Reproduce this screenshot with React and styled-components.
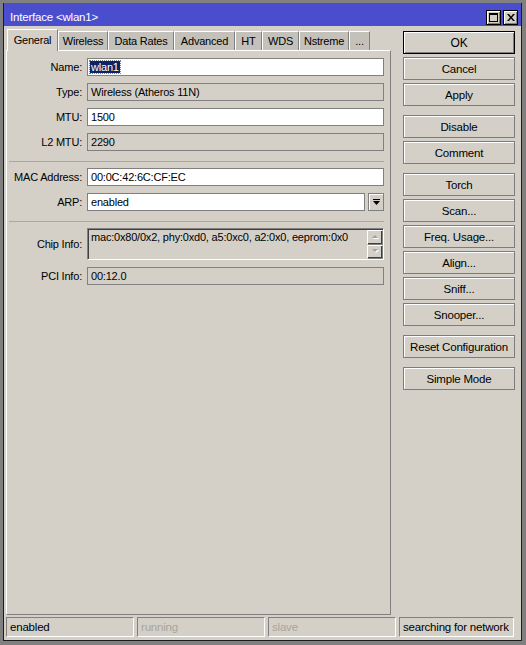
import React from 'react'
import styled, { createGlobalStyle } from 'styled-components'

const GlobalStyle = createGlobalStyle`
	html, body {
		margin: 0;
		padding: 0;
		background: #808080;
	}
	body {
		font-family: "Liberation Sans", Arial, sans-serif;
		font-size: 11px;
		letter-spacing: -0.2px;
		color: #000;
	}
`

const Desktop = styled.div`
	width: 526px;
	height: 645px;
	padding: 3px 4px 4px 3px;
	box-sizing: border-box;
	overflow: hidden;
`

const Window = styled.div`
	width: 519px;
	height: 638px;
	box-sizing: border-box;
	background: #d4d0c8;
	border: 1px solid #1c1c1c;
	border-top: none;
	display: flex;
	flex-direction: column;
`

const TitleBar = styled.div`
	height: 23px;
	box-sizing: border-box;
	padding: 5px 3px 0 6px;
	background: #4a4ecd;
	color: #fff;
	display: flex;
	align-items: center;
	font-size: 11.5px;
`

const Title = styled.span`
	flex: 1;
`

const TitleButtons = styled.div`
	display: flex;
	gap: 2px;
`

const TitleButton = styled.div`
	width: 15px;
	height: 15px;
	box-sizing: border-box;
	background: #d4d0c8;
	border: 1px solid #000;
	box-shadow: inset 1px 1px 0 #fff, inset -1px -1px 0 #808080;
	display: flex;
	align-items: center;
	justify-content: center;
`

const Main = styled.div`
	flex: 1;
	display: flex;
	gap: 12px;
	padding: 3px 6px 0 2px;
	min-height: 0;
`

const LeftCol = styled.div`
	width: 385px;
	display: flex;
	flex-direction: column;
`

const Tabs = styled.div`
	height: 21px;
	display: flex;
	align-items: flex-end;
	padding-left: 1px;
	position: relative;
	z-index: 1;
`

const Tab = styled.div`
	width: ${p => p.$w}px;
	box-sizing: border-box;
	height: ${p => (p.$active ? 22 : 19)}px;
	margin-bottom: ${p => (p.$active ? -1 : 0)}px;
	background: ${p => (p.$active ? '#d4d0c8' : '#c4c1ba')};
	border-top: 1px solid #fff;
	border-left: 1px solid #fff;
	border-right: 1px solid #808080;
	display: flex;
	align-items: center;
	justify-content: center;
	padding-bottom: ${p => (p.$active ? 2 : 0)}px;
`

const Panel = styled.div`
	flex: 1;
	border-top: 1px solid #fff;
	border-left: 1px solid #fff;
	border-right: 1px solid #808080;
	border-bottom: 1px solid #808080;
	padding: 7px 6px 0 0;
	display: flex;
	flex-direction: column;
	gap: 7px;
`

const Row = styled.div`
	display: grid;
	grid-template-columns: 75px 1fr;
	column-gap: 5px;
	align-items: center;
`

const Label = styled.span`
	text-align: right;
`

const Field = styled.div`
	height: 18px;
	box-sizing: border-box;
	border: 1px solid #808080;
	background: ${p => (p.$editable ? '#fff' : '#d4d0c8')};
	padding: 0 3px;
	display: flex;
	align-items: center;
	white-space: nowrap;
	overflow: hidden;
`

const Selected = styled.span`
	background: #0a246a;
	color: #fff;
	outline: 1px dotted #808080;
	margin-left: -1px;
	padding: 0 1px;
`

const Combo = styled.div`
	display: flex;
	gap: 3px;
	& > ${Field} {
		flex: 1;
	}
`

const DropButton = styled.div`
	width: 16px;
	height: 18px;
	box-sizing: border-box;
	border: 1px solid #808080;
	box-shadow: inset 1px 1px 0 #fff;
	display: flex;
	align-items: center;
	justify-content: center;
`

const Separator = styled.div`
	height: 1px;
	background: #aaa7a0;
	margin: 3px 0 -1px 2px;
`

const InfoBox = styled.div`
	height: 32px;
	box-sizing: border-box;
	border-top: 1px solid #808080;
	border-left: 1px solid #808080;
	border-bottom: 1px solid #fff;
	border-right: 1px solid #fff;
	box-shadow: inset 1px 1px 0 #404040;
	display: flex;
`

const InfoText = styled.div`
	flex: 1;
	padding: 2px 0 0 3px;
	white-space: nowrap;
	overflow: hidden;
`

const ScrollCol = styled.div`
	width: 16px;
	display: flex;
	flex-direction: column;
	padding-top: 1px;
`

const ScrollButton = styled.div`
	height: 15px;
	box-sizing: border-box;
	border: 1px solid #808080;
	border-top-color: #fff;
	border-left-color: #fff;
	box-shadow: inset -1px -1px 0 #404040;
	display: flex;
	align-items: center;
	justify-content: center;
`

const RightCol = styled.div`
	width: 112px;
	padding-top: 2px;
	display: flex;
	flex-direction: column;
	gap: 9px;
`

const ButtonGroup = styled.div`
	display: flex;
	flex-direction: column;
	gap: 3px;
`

const Button = styled.div`
	height: 23px;
	box-sizing: border-box;
	background: #d4d0c8;
	border: 1px solid ${p => (p.$primary ? '#000' : '#7c7c7c')};
	box-shadow: inset 1px 1px 0 #fff${p => (p.$primary ? ', inset -1px -1px 0 #808080' : '')};
	display: flex;
	align-items: center;
	justify-content: center;
	font-size: ${p => (p.$primary ? 12 : 11.5)}px;
`

const StatusBar = styled.div`
	display: flex;
	gap: 3px;
	padding: 2px 7px 3px 2px;
`

const StatusCell = styled.div`
	width: ${p => p.$w}px;
	height: 20px;
	box-sizing: border-box;
	border-top: 1px solid #808080;
	border-left: 1px solid #808080;
	border-bottom: 1px solid #fff;
	border-right: 1px solid #fff;
	padding: 0 3px;
	display: flex;
	align-items: center;
	color: ${p => (p.$dim ? '#a8a5a0' : '#000')};
	font-size: 11.5px;
	white-space: nowrap;
`

const tabs = [
	['General', 51],
	['Wireless', 50],
	['Data Rates', 66],
	['Advanced', 61],
	['HT', 27],
	['WDS', 37],
	['Nstreme', 50],
	['...', 21]
]

const buttonGroups = [
	['OK', 'Cancel', 'Apply'],
	['Disable', 'Comment'],
	['Torch', 'Scan...', 'Freq. Usage...', 'Align...', 'Sniff...', 'Snooper...'],
	['Reset Configuration'],
	['Simple Mode']
]

const status = [
	['enabled', 128, false],
	['running', 128, true],
	['slave', 128, true],
	['searching for network', 115, false]
]

const MaxIcon = () => (
	<svg width="9" height="9" viewBox="0 0 9 9">
		<rect x="0.5" y="0.5" width="8" height="8" fill="none" stroke="#000" />
		<rect x="0" y="0" width="9" height="2" fill="#000" />
	</svg>
)

const CloseIcon = () => (
	<svg width="8" height="7" viewBox="0 0 8 7">
		<path d="M0 0h2l2 2.5L6 0h2L5 3.5 8 7H6L4 4.5 2 7H0l3-3.5z" fill="#000" />
	</svg>
)

const DropIcon = () => (
	<svg width="7" height="7" viewBox="0 0 7 7">
		<rect x="0" y="0" width="7" height="1" fill="#000" />
		<path d="M0 2h7L3.5 6z" fill="#000" />
	</svg>
)

const Arrow = ({ down }) => (
	<svg width="7" height="5" viewBox="0 0 7 5">
		{down ? (
			<>
				<path d="M1 1h6L4 4z" fill="#fff" />
				<path d="M0 0h6L3 3z" fill="#a0a0a0" />
			</>
		) : (
			<>
				<path d="M1 4h6L4 1z" fill="#fff" />
				<path d="M0 3h6L3 0z" fill="#a0a0a0" />
			</>
		)}
	</svg>
)

const FieldRow = ({ label, children }) => (
	<Row>
		<Label>{label}</Label>
		{children}
	</Row>
)

const App = () => (
	<Desktop>
		<GlobalStyle />
		<Window>
			<TitleBar>
				<Title>Interface &lt;wlan1&gt;</Title>
				<TitleButtons>
					<TitleButton><MaxIcon /></TitleButton>
					<TitleButton><CloseIcon /></TitleButton>
				</TitleButtons>
			</TitleBar>
			<Main>
				<LeftCol>
					<Tabs>
						{tabs.map(([name, w], i) => (
							<Tab key={name} $w={w} $active={i === 0}>{name}</Tab>
						))}
					</Tabs>
					<Panel>
						<FieldRow label="Name:">
							<Field $editable><Selected>wlan1</Selected></Field>
						</FieldRow>
						<FieldRow label="Type:">
							<Field>Wireless (Atheros 11N)</Field>
						</FieldRow>
						<FieldRow label="MTU:">
							<Field $editable>1500</Field>
						</FieldRow>
						<FieldRow label="L2 MTU:">
							<Field>2290</Field>
						</FieldRow>
						<Separator />
						<FieldRow label="MAC Address:">
							<Field $editable>00:0C:42:6C:CF:EC</Field>
						</FieldRow>
						<FieldRow label="ARP:">
							<Combo>
								<Field $editable>enabled</Field>
								<DropButton><DropIcon /></DropButton>
							</Combo>
						</FieldRow>
						<Separator />
						<FieldRow label="Chip Info:">
							<InfoBox>
								<InfoText>mac:0x80/0x2, phy:0xd0, a5:0xc0, a2:0x0, eeprom:0x0</InfoText>
								<ScrollCol>
									<ScrollButton><Arrow /></ScrollButton>
									<ScrollButton><Arrow down /></ScrollButton>
								</ScrollCol>
							</InfoBox>
						</FieldRow>
						<FieldRow label="PCI Info:">
							<Field>00:12.0</Field>
						</FieldRow>
					</Panel>
				</LeftCol>
				<RightCol>
					{buttonGroups.map(group => (
						<ButtonGroup key={group[0]}>
							{group.map(name => (
								<Button key={name} $primary={name === 'OK'}>{name}</Button>
							))}
						</ButtonGroup>
					))}
				</RightCol>
			</Main>
			<StatusBar>
				{status.map(([text, w, dim]) => (
					<StatusCell key={text} $w={w} $dim={dim}>{text}</StatusCell>
				))}
			</StatusBar>
		</Window>
	</Desktop>
)

export default App
